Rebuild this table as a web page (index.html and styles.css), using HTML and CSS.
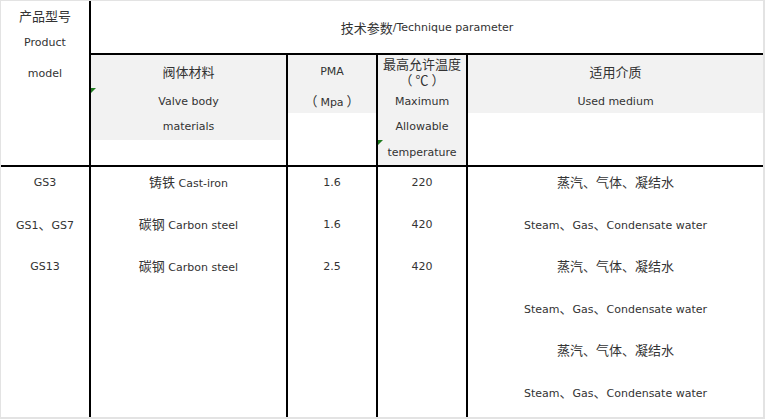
FILE: index.html
```html
<!DOCTYPE html>
<html lang="zh">
<head>
<meta charset="utf-8">
<title>技术参数</title>
<link rel="stylesheet" href="styles.css">
</head>
<body>
<div class="sheet">
  <div class="grid">
    <div class="cell model">
      <p class="hp m1"><span class="zh">产品型号</span></p>
      <p class="hp m2">Product</p>
      <p class="hp m3">model</p>
    </div>
    <div class="cell title"><span class="zh">技术参数</span>/Technique parameter</div>

    <div class="cell head">
      <p class="hp p1 shade"><span class="zh">阀体材料</span></p>
      <p class="hp p2 shade mark">Valve body</p>
      <p class="hp p3 shade">materials</p>
    </div>
    <div class="cell head">
      <p class="hp p1 shade">PMA</p>
      <p class="hp p2 shade"><span><span class="zh lp">（</span>Mpa<span class="zh rp">）</span></span></p>
    </div>
    <div class="cell head shade">
      <p class="hp p1 wrap"><span class="zh">最高允许温度<br><span class="lp">（</span>℃<span class="rp">）</span></span></p>
      <p class="hp p2">Maximum</p>
      <p class="hp p3">Allowable</p>
      <p class="hp p4 mark">temperature</p>
    </div>
    <div class="cell head last">
      <p class="hp p1 shade"><span class="zh">适用介质</span></p>
      <p class="hp p2 shade">Used medium</p>
    </div>

    <div class="cell body">
      <p class="ln">GS3</p>
      <p class="ln">GS1<span class="zh">、</span>GS7</p>
      <p class="ln">GS13</p>
    </div>
    <div class="cell body">
      <p class="ln"><span class="zh">铸铁</span> Cast-iron</p>
      <p class="ln"><span class="zh">碳钢</span> Carbon steel</p>
      <p class="ln"><span class="zh">碳钢</span> Carbon steel</p>
    </div>
    <div class="cell body">
      <p class="ln">1.6</p>
      <p class="ln">1.6</p>
      <p class="ln">2.5</p>
    </div>
    <div class="cell body">
      <p class="ln">220</p>
      <p class="ln">420</p>
      <p class="ln">420</p>
    </div>
    <div class="cell body last">
      <p class="ln"><span class="zh">蒸汽、气体、凝结水</span></p>
      <p class="ln">Steam<span class="zh">、</span>Gas<span class="zh">、</span>Condensate water</p>
      <p class="ln"><span class="zh">蒸汽、气体、凝结水</span></p>
      <p class="ln">Steam<span class="zh">、</span>Gas<span class="zh">、</span>Condensate water</p>
      <p class="ln"><span class="zh">蒸汽、气体、凝结水</span></p>
      <p class="ln">Steam<span class="zh">、</span>Gas<span class="zh">、</span>Condensate water</p>
    </div>
  </div>
</div>
</body>
</html>
```
FILE: styles.css
```css
* { box-sizing: border-box; }
html, body { margin: 0; padding: 0; background: #fff; }
body {
  font-family: "DejaVu Sans", "Noto Sans CJK SC", sans-serif;
  font-size: 11px;
  color: #333;
}
.zh {
  font-family: "Noto Sans CJK SC", sans-serif;
  font-size: 13px;
  line-height: 1;
}
.lp { margin-right: 3px; }
.rp { margin-left: 3px; }
p { margin: 0; }

.sheet {
  width: 765px;
  height: 419px;
  border-style: solid;
  border-color: #e3e3e3;
  border-width: 1px 2px 2px 1px;
}
.grid {
  display: grid;
  grid-template-columns: 90px 197px 90px 90px 295px;
  grid-template-rows: 54px 112px 250px;
  height: 100%;
}
.cell {
  border-right: 2px solid #000;
  border-bottom: 2px solid #000;
  text-align: center;
  min-width: 0;
}
.cell.last { border-right: none; }
.model { grid-row: 1 / 3; }
.title {
  grid-column: 2 / 6;
  border-right: none;
  display: flex;
  align-items: center;
  justify-content: center;
}
.hp {
  display: flex;
  align-items: center;
  justify-content: center;
  position: relative;
}
.m1 { height: 28px; }
.m2 { height: 26px; }
.m3 { height: 36px; }
.p1 { height: 33px; }
.p2 { height: 25px; padding-top: 1px; }
.p3 { height: 27px; }
.p4 { height: 25px; }
.wrap { line-height: 15.5px; }
.wrap .zh { line-height: 15.5px; }
.shade { background: #f2f2f2; }
.mark::before {
  content: "";
  position: absolute;
  left: 0;
  top: 0;
  width: 0;
  height: 0;
  border-top: 5px solid #1f7a1f;
  border-right: 5px solid transparent;
}
.body { border-bottom: none; padding-top: 8px; }
.ln {
  height: 16px;
  line-height: 16px;
  margin-bottom: 26px;
  white-space: nowrap;
}
```
